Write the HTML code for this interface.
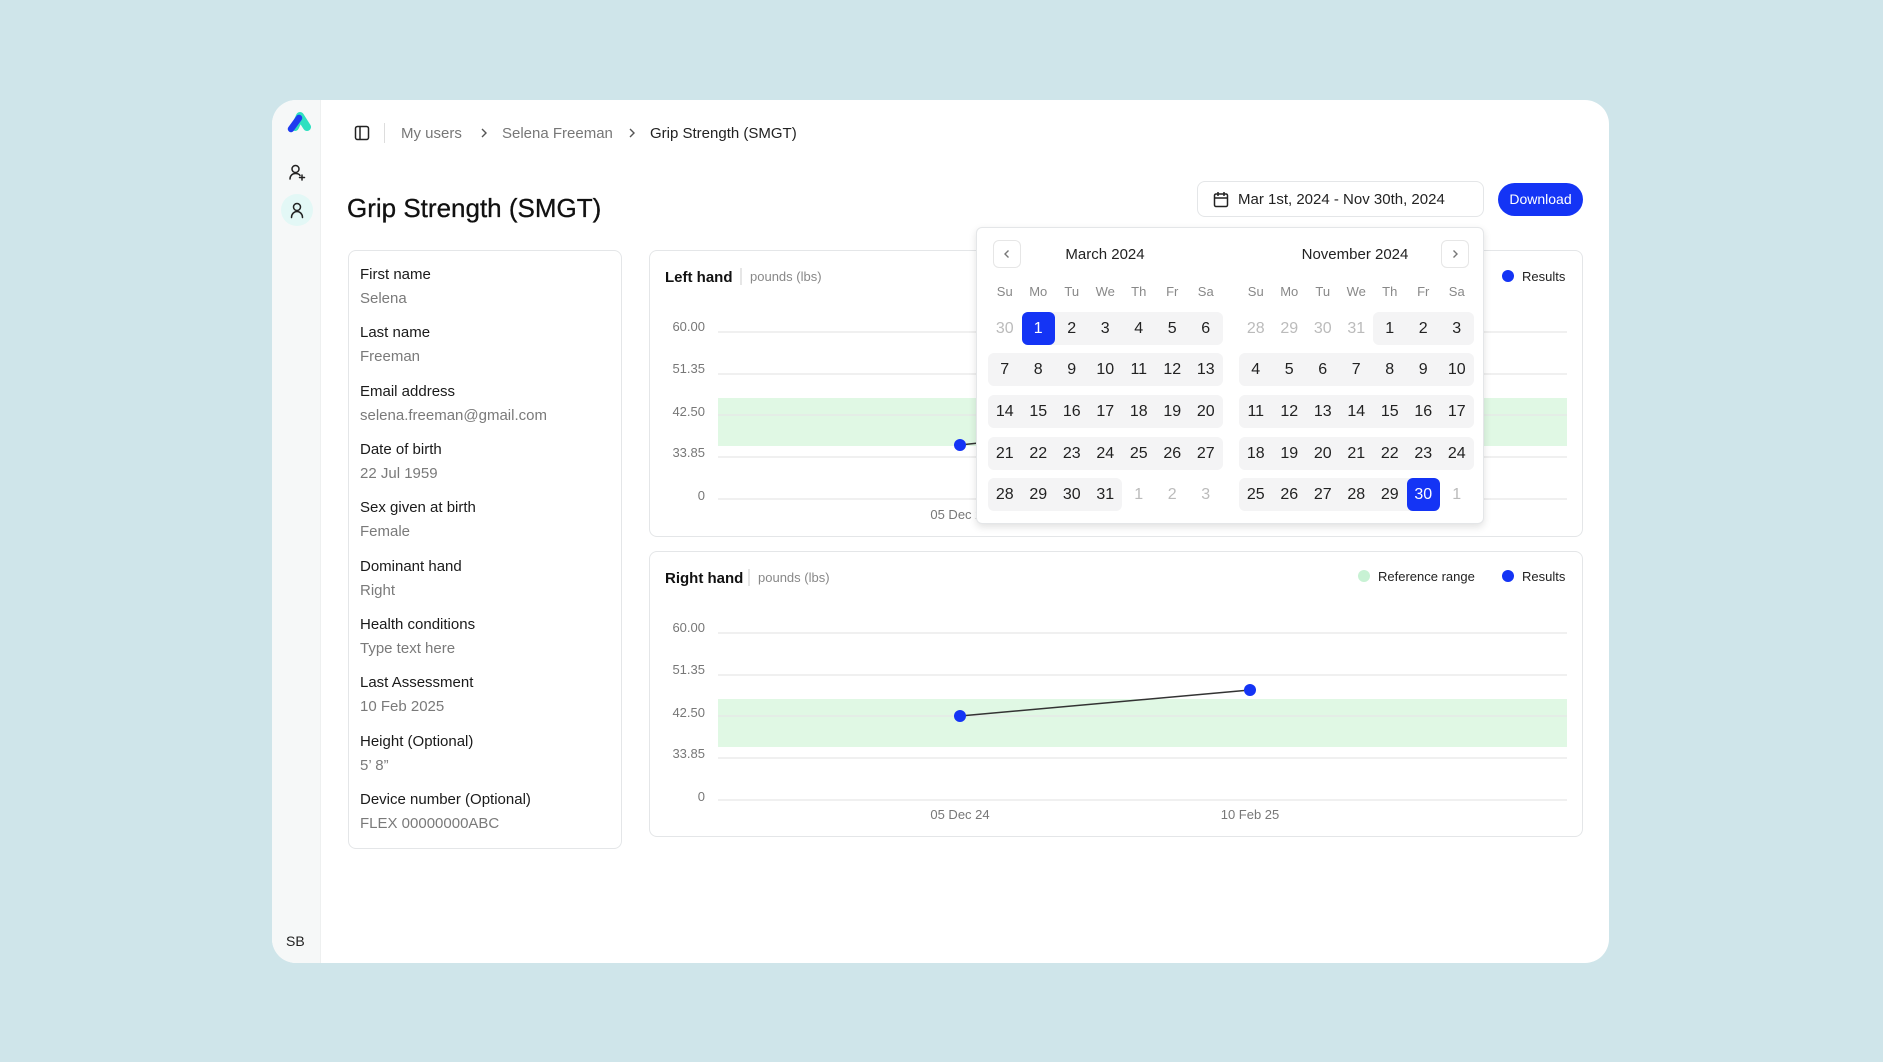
<!DOCTYPE html>
<html><head><meta charset="utf-8"><style>
*{margin:0;padding:0;box-sizing:border-box}
body{width:1883px;height:1062px;background:#cfe5ea;font-family:"Liberation Sans",sans-serif;position:relative;overflow:hidden;color:#111}
.abs{position:absolute}
.card{position:absolute;left:272px;top:100px;width:1337px;height:863px;background:#fff;border-radius:24px;overflow:hidden}
.side{position:absolute;left:0;top:0;width:49px;height:100%;background:#f6f8f8;border-right:1px solid #eef0f0}
.bc{font-size:15px;color:#777;top:125px}
.lbl{left:360px;font-size:15px;color:#1a1a1a}
.val{left:360px;font-size:15px;color:#7a7a7a}
.box{position:absolute;background:#fff;border:1px solid #e4e6e8;border-radius:8px}
.pop{position:absolute;left:976px;top:227px;width:508px;height:297px;background:#fff;border:1px solid #e4e6e8;border-radius:6px;box-shadow:0 3px 8px rgba(0,0,0,.12)}
.band{position:absolute;display:flex;height:33px;border-radius:6px}
.band.bg{background:#f4f4f5}
.c{width:33.5px;height:33px;line-height:33px;text-align:center;font-size:16px;color:#222;flex:none;border-radius:6px}
.f{color:#bbb}
.s{background:#1434f5;color:#fff}
.dh{position:absolute;top:284px;display:flex}
.dh span{width:33.5px;text-align:center;font-size:13px;color:#888}
.nav{position:absolute;width:28px;height:28px;border:1px solid #e6e6e6;border-radius:6px}
</style></head><body>
<div class="card"><div class="side"></div></div>

<svg class="abs" style="left:283px;top:107px" width="30" height="28" viewBox="0 0 30 28">
<path d="M12 20 L17 9 L24 20" stroke="#2fe0c0" stroke-width="8" fill="none" stroke-linecap="round" stroke-linejoin="round"/>
<path d="M8 22 L16 11" stroke="#1f3cf0" stroke-width="6.5" stroke-linecap="round"/>
</svg>
<svg class="abs" style="left:288px;top:163px" width="18" height="18" viewBox="0 0 18 18" fill="none" stroke="#222" stroke-width="1.5" stroke-linecap="round"><circle cx="7.5" cy="6" r="3.5"/><path d="M2 16c0-3.5 2.5-5.5 5.5-5.5s4 1 4.5 2"/><path d="M14 12v5M11.5 14.5h5"/></svg>
<div class="abs" style="left:281px;top:194px;width:32px;height:32px;border-radius:50%;background:#e3f8f6"></div>
<svg class="abs" style="left:288px;top:201px" width="18" height="18" viewBox="0 0 18 18" fill="none" stroke="#222" stroke-width="1.5" stroke-linecap="round"><circle cx="9" cy="6" r="3.5"/><path d="M3.5 16.5c0-3.5 2.5-6 5.5-6s5.5 2.5 5.5 6"/></svg>
<div class="abs" style="left:286px;top:933px;font-size:14px;color:#222">SB</div>

<svg class="abs" style="left:354px;top:125px" width="16" height="16" viewBox="0 0 16 16" fill="none" stroke="#222" stroke-width="1.5"><rect x="1.5" y="1.5" width="13" height="13" rx="2"/><path d="M6 1.5v13"/></svg>
<div class="abs" style="left:384px;top:123px;width:1px;height:20px;background:#ddd"></div>
<div class="abs bc" style="left:401px">My users</div>
<svg class="abs" style="left:479px;top:127px" width="10" height="12" viewBox="0 0 10 12" fill="none" stroke="#555" stroke-width="1.4"><path d="M3 2l4 4-4 4"/></svg>
<div class="abs bc" style="left:502px">Selena Freeman</div>
<svg class="abs" style="left:627px;top:127px" width="10" height="12" viewBox="0 0 10 12" fill="none" stroke="#555" stroke-width="1.4"><path d="M3 2l4 4-4 4"/></svg>
<div class="abs bc" style="left:650px;color:#222">Grip Strength (SMGT)</div>

<div class="abs" style="left:347px;top:193px;font-size:26px;color:#111;-webkit-text-stroke:0.3px #111">Grip Strength (SMGT)</div>

<div class="box" style="left:1197px;top:181px;width:287px;height:36px"></div>
<svg class="abs" style="left:1213px;top:191px" width="16" height="17" viewBox="0 0 16 17" fill="none" stroke="#222" stroke-width="1.5"><rect x="1.5" y="3" width="13" height="12.5" rx="1.5"/><path d="M1.5 7h13M5 1v4M11 1v4"/></svg>
<div class="abs" style="left:1238px;top:191px;font-size:15px;color:#222">Mar 1st, 2024 - Nov 30th, 2024</div>
<div class="abs" style="left:1498px;top:183px;width:85px;height:33px;border-radius:17px;background:#1434f5;color:#fff;font-size:14px;text-align:center;line-height:33px">Download</div>

<div class="box" style="left:348px;top:250px;width:274px;height:599px"></div>
<div class="abs lbl" style="top:266px">First name</div><div class="abs val" style="top:290px">Selena</div>
<div class="abs lbl" style="top:324px">Last name</div><div class="abs val" style="top:348px">Freeman</div>
<div class="abs lbl" style="top:383px">Email address</div><div class="abs val" style="top:407px">selena.freeman@gmail.com</div>
<div class="abs lbl" style="top:441px">Date of birth</div><div class="abs val" style="top:465px">22 Jul 1959</div>
<div class="abs lbl" style="top:499px">Sex given at birth</div><div class="abs val" style="top:523px">Female</div>
<div class="abs lbl" style="top:558px">Dominant hand</div><div class="abs val" style="top:582px">Right</div>
<div class="abs lbl" style="top:616px">Health conditions</div><div class="abs val" style="top:640px">Type text here</div>
<div class="abs lbl" style="top:674px">Last Assessment</div><div class="abs val" style="top:698px">10 Feb 2025</div>
<div class="abs lbl" style="top:733px">Height (Optional)</div><div class="abs val" style="top:757px">5’ 8”</div>
<div class="abs lbl" style="top:791px">Device number (Optional)</div><div class="abs val" style="top:815px">FLEX 00000000ABC</div>

<div class="box" style="left:649px;top:250px;width:934px;height:287px"></div>
<div class="box" style="left:649px;top:551px;width:934px;height:286px"></div>

<svg class="abs" style="left:0;top:0" width="1883" height="1062" font-family="Liberation Sans, sans-serif">
<g font-size="15" font-weight="bold" fill="#111"><text x="665" y="282">Left hand</text><text x="665" y="583">Right hand</text></g>
<line x1="741" y1="268" x2="741" y2="285" stroke="#ccc"/><line x1="749" y1="569" x2="749" y2="586" stroke="#ccc"/>
<g font-size="13" fill="#888"><text x="750" y="281">pounds (lbs)</text><text x="758" y="582">pounds (lbs)</text></g>
<circle cx="1508" cy="276" r="6" fill="#1434f5"/><text x="1522" y="281" font-size="13" fill="#222">Results</text>
<circle cx="1364" cy="576" r="6" fill="#c8f2d4"/><text x="1378" y="581" font-size="13" fill="#222">Reference range</text>
<circle cx="1508" cy="576" r="6" fill="#1434f5"/><text x="1522" y="581" font-size="13" fill="#222">Results</text>
<rect x="718" y="398" width="849" height="48" fill="#e0f8e4"/>
<rect x="718" y="699" width="849" height="48" fill="#e0f8e4"/>
<g stroke="#e6e6e6" stroke-width="1.2">
<line x1="718" x2="1567" y1="332" y2="332"/><line x1="718" x2="1567" y1="374" y2="374"/><line x1="718" x2="1567" y1="415" y2="415"/><line x1="718" x2="1567" y1="457" y2="457"/><line x1="718" x2="1567" y1="499" y2="499"/>
<line x1="718" x2="1567" y1="633" y2="633"/><line x1="718" x2="1567" y1="675" y2="675"/><line x1="718" x2="1567" y1="716" y2="716"/><line x1="718" x2="1567" y1="758" y2="758"/><line x1="718" x2="1567" y1="800" y2="800"/>
</g>
<g font-size="13" fill="#777" text-anchor="end">
<text x="705" y="331">60.00</text><text x="705" y="373">51.35</text><text x="705" y="416">42.50</text><text x="705" y="457">33.85</text><text x="705" y="500">0</text>
<text x="705" y="632">60.00</text><text x="705" y="674">51.35</text><text x="705" y="717">42.50</text><text x="705" y="758">33.85</text><text x="705" y="801">0</text>
</g>
<g font-size="13" fill="#777" text-anchor="middle"><text x="960" y="519">05 Dec 24</text><text x="960" y="819">05 Dec 24</text><text x="1250" y="819">10 Feb 25</text></g>
<line x1="960" y1="445" x2="1100" y2="430" stroke="#333" stroke-width="1.5"/>
<circle cx="960" cy="445" r="6" fill="#1434f5"/>
<line x1="960" y1="716" x2="1250" y2="690" stroke="#333" stroke-width="1.5"/>
<circle cx="960" cy="716" r="6" fill="#1434f5"/><circle cx="1250" cy="690" r="6" fill="#1434f5"/>
</svg>

<div class="pop"></div>
<div class="nav" style="left:993px;top:240px"></div>
<svg class="abs" style="left:1001px;top:248px" width="12" height="12" viewBox="0 0 12 12" fill="none" stroke="#777" stroke-width="1.4"><path d="M7.5 2.5L4 6l3.5 3.5"/></svg>
<div class="nav" style="left:1441px;top:240px"></div>
<svg class="abs" style="left:1449px;top:248px" width="12" height="12" viewBox="0 0 12 12" fill="none" stroke="#777" stroke-width="1.4"><path d="M4.5 2.5L8 6l-3.5 3.5"/></svg>
<div class="abs" style="left:1035px;top:246px;width:140px;text-align:center;font-size:15px;color:#222">March 2024</div>
<div class="abs" style="left:1285px;top:246px;width:140px;text-align:center;font-size:15px;color:#222">November 2024</div>
<div class="dh" style="left:988px"><span>Su</span><span>Mo</span><span>Tu</span><span>We</span><span>Th</span><span>Fr</span><span>Sa</span></div>
<div class="dh" style="left:1239px"><span>Su</span><span>Mo</span><span>Tu</span><span>We</span><span>Th</span><span>Fr</span><span>Sa</span></div>

<div class="band" style="left:988px;top:312px"><div class="c f">30</div></div>
<div class="band bg" style="left:1021.5px;top:312px"><div class="c s">1</div><div class="c">2</div><div class="c">3</div><div class="c">4</div><div class="c">5</div><div class="c">6</div></div>
<div class="band bg" style="left:988px;top:353px"><div class="c">7</div><div class="c">8</div><div class="c">9</div><div class="c">10</div><div class="c">11</div><div class="c">12</div><div class="c">13</div></div>
<div class="band bg" style="left:988px;top:395px"><div class="c">14</div><div class="c">15</div><div class="c">16</div><div class="c">17</div><div class="c">18</div><div class="c">19</div><div class="c">20</div></div>
<div class="band bg" style="left:988px;top:437px"><div class="c">21</div><div class="c">22</div><div class="c">23</div><div class="c">24</div><div class="c">25</div><div class="c">26</div><div class="c">27</div></div>
<div class="band bg" style="left:988px;top:478px"><div class="c">28</div><div class="c">29</div><div class="c">30</div><div class="c">31</div></div>
<div class="band" style="left:1122px;top:478px"><div class="c f">1</div><div class="c f">2</div><div class="c f">3</div></div>

<div class="band" style="left:1239px;top:312px"><div class="c f">28</div><div class="c f">29</div><div class="c f">30</div><div class="c f">31</div></div>
<div class="band bg" style="left:1373px;top:312px"><div class="c">1</div><div class="c">2</div><div class="c">3</div></div>
<div class="band bg" style="left:1239px;top:353px"><div class="c">4</div><div class="c">5</div><div class="c">6</div><div class="c">7</div><div class="c">8</div><div class="c">9</div><div class="c">10</div></div>
<div class="band bg" style="left:1239px;top:395px"><div class="c">11</div><div class="c">12</div><div class="c">13</div><div class="c">14</div><div class="c">15</div><div class="c">16</div><div class="c">17</div></div>
<div class="band bg" style="left:1239px;top:437px"><div class="c">18</div><div class="c">19</div><div class="c">20</div><div class="c">21</div><div class="c">22</div><div class="c">23</div><div class="c">24</div></div>
<div class="band bg" style="left:1239px;top:478px"><div class="c">25</div><div class="c">26</div><div class="c">27</div><div class="c">28</div><div class="c">29</div><div class="c s">30</div></div>
<div class="band" style="left:1440px;top:478px"><div class="c f">1</div></div>
</body></html>
